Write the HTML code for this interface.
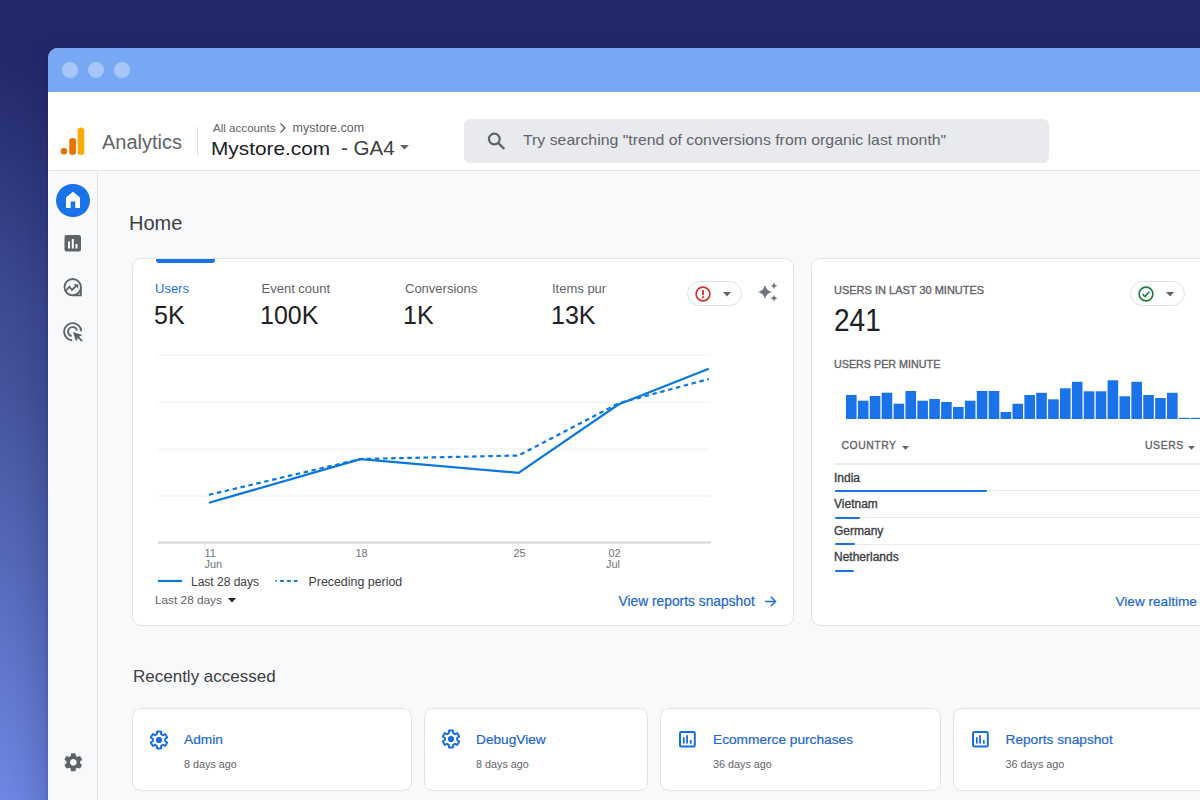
<!DOCTYPE html>
<html><head><meta charset="utf-8">
<style>
*{box-sizing:border-box;margin:0;padding:0}
html,body{width:1200px;height:800px;overflow:hidden}
body{font-family:"Liberation Sans",sans-serif;position:relative;
 background:linear-gradient(180deg,#22296b 0px,#23296c 60px,#2d367b 150px,#3e4b95 300px,#46559f 400px,#5b6fc1 600px,#7089e6 800px);}
.a{position:absolute;line-height:1;white-space:nowrap}
#win{position:absolute;left:48px;top:48px;width:1200px;height:800px;border-top-left-radius:10px;overflow:hidden;background:#f8f9fa;box-shadow:-1px 1px 3px rgba(15,20,60,.15),-6px 8px 44px rgba(15,20,70,.3)}
#bar{position:absolute;left:0;top:0;width:100%;height:44px;background:#78a8f4}
.dot{position:absolute;top:14px;width:16px;height:16px;border-radius:50%;background:#a7c6f6}
#hdr{position:absolute;left:0;top:44px;width:100%;height:79px;background:#fff;border-bottom:1px solid #e3e5e8}
#side{position:absolute;left:49px;top:123px;width:1px;height:700px;background:#e3e5e8}
.card{position:absolute;background:#fff;border:1px solid #e1e3e6;border-radius:8px}
.lbl{font-size:13px;color:#5f6368}
.big{font-size:25px;color:#202124}
.cap{font-size:11px;font-weight:400;color:#5f6368;-webkit-text-stroke:0.35px #5f6368}
.ctry{font-size:12px;color:#3c4043;font-weight:400;-webkit-text-stroke:0.35px #3c4043}
.rl{position:absolute;height:1px;background:#e8eaed}
.ub{position:absolute;height:2px;background:#1a73e8;border-radius:1px}
.bars{position:absolute;left:846px;top:370px;height:49px}
.b{position:absolute;bottom:0;width:10.5px;background:#1a73e8}
.ax{font-size:11px;color:#70757a}
.rt{font-size:13.7px;color:#1b67d6;-webkit-text-stroke:0.2px #1b67d6}
.rs{font-size:10.8px;color:#5f6368}
</style></head><body>
<div id="win">
 <div id="bar"><div class="dot" style="left:14px"></div><div class="dot" style="left:40px"></div><div class="dot" style="left:66px"></div></div>
 <div id="hdr"></div>
 <div id="side"></div>
</div>

<!-- header -->
<svg class="a" style="left:58px;top:126px" width="30" height="32" viewBox="0 0 30 32">
 <circle cx="6" cy="25.3" r="3.3" fill="#e37400"/>
 <rect x="11.3" y="12" width="6.7" height="17" rx="3.3" fill="#e37400"/>
 <rect x="19.6" y="1.6" width="6.7" height="27.4" rx="3.3" fill="#f9ab00"/>
</svg>
<div class="a" style="left:102px;top:132px;font-size:20px;color:#5f6368">Analytics</div>
<div class="a" style="left:197px;top:127px;width:1px;height:28px;background:#dadce0"></div>
<div class="a" style="left:213px;top:121.5px;font-size:11.6px;color:#5f6368">All accounts</div>
<svg class="a" style="left:279px;top:122px" width="8" height="12" viewBox="0 0 8 12"><path d="M1.5 1.5 L6 6 L1.5 10.5" stroke="#5f6368" stroke-width="1.4" fill="none"/></svg>
<div class="a" style="left:292.5px;top:121.5px;font-size:12.5px;color:#5f6368">mystore.com</div>
<div class="a" style="left:211px;top:139.2px;font-size:19px;color:#202124;transform:scaleX(1.095);transform-origin:0 0">Mystore.com</div>
<div class="a" style="left:341px;top:138px;font-size:20.5px;color:#3c4043">- GA4</div>
<svg class="a" style="left:400px;top:145px" width="9" height="5" viewBox="0 0 9 5"><path d="M0 0 L9 0 L4.5 4.5Z" fill="#5f6368"/></svg>

<div class="a" style="left:464px;top:119px;width:585px;height:44px;background:#e9eaee;border-radius:6px"></div>
<svg class="a" style="left:486px;top:131px" width="20" height="20" viewBox="0 0 20 20"><circle cx="8.3" cy="8" r="5.4" fill="none" stroke="#5f6368" stroke-width="2.2"/><path d="M12.2 11.9 L18.3 18" stroke="#5f6368" stroke-width="2.4" stroke-linecap="butt"/></svg>
<div class="a" style="left:523px;top:132.9px;font-size:14.3px;color:#5f6368;transform:scaleX(1.107);transform-origin:0 0">Try searching "trend of conversions from organic last month"</div>

<!-- sidebar -->
<div class="a" style="left:56px;top:183.5px;width:33.5px;height:33px;border-radius:50%;background:#1a73e8"></div>
<svg class="a" style="left:63px;top:190px" width="20" height="20" viewBox="0 0 20 20"><path fill="#fff" d="M10 1.8 L17 7.5 V18 H12.3 V11.5 H7.7 V18 H3 V7.5Z"/></svg>
<svg class="a" style="left:64px;top:235px" width="17" height="17" viewBox="0 0 17 17"><rect x="0.5" y="0" width="16.5" height="16.5" rx="2" fill="#5f6368"/><rect x="4" y="6.5" width="2" height="7" fill="#fff"/><rect x="7.8" y="4" width="2" height="9.5" fill="#fff"/><rect x="11.5" y="9" width="2" height="4.5" fill="#fff"/></svg>
<svg class="a" style="left:60px;top:275px" width="26" height="26" viewBox="0 0 26 26"><circle cx="12.7" cy="12.2" r="8.2" fill="none" stroke="#5f6368" stroke-width="1.8"/><path d="M20.9 12.2 V20.3 H12.7" fill="none" stroke="#5f6368" stroke-width="1.8"/><path d="M5.8 16 L9.4 11.6 L12 15 L16.6 10.4" fill="none" stroke="#5f6368" stroke-width="1.8"/><path d="M13.6 9.2 H18.2 V13.8Z" fill="#5f6368"/></svg>
<svg class="a" style="left:62px;top:320.6px" width="22" height="22" viewBox="0 0 22 22"><path d="M10.2 19.3 A8.6 8.6 0 1 1 19.3 10.2" fill="none" stroke="#5f6368" stroke-width="1.9"/><path d="M9.6 15 A4.5 4.5 0 1 1 15 9.6" fill="none" stroke="#5f6368" stroke-width="1.9"/><path d="M11 11 L20.5 14 L17 15.8 L20.8 19.6 L19.6 20.8 L15.8 17 L14 20.5Z" fill="#5f6368"/></svg>
<svg class="a" style="left:61.5px;top:751.3px" width="22.6" height="22.6" viewBox="0 0 24 24"><path fill="#5f6368" d="M19.14 12.94c.04-.3.06-.61.06-.94 0-.32-.02-.64-.07-.94l2.03-1.58a.49.49 0 0 0 .12-.61l-1.92-3.32a.488.488 0 0 0-.59-.22l-2.39.96c-.5-.38-1.03-.7-1.62-.94l-.36-2.54a.484.484 0 0 0-.48-.41h-3.84c-.24 0-.43.17-.47.41l-.36 2.54c-.59.24-1.13.57-1.62.94l-2.39-.96c-.22-.08-.47 0-.59.22L2.74 8.87c-.12.21-.08.47.12.61l2.03 1.58c-.05.3-.09.63-.09.94s.02.64.07.94l-2.03 1.58a.49.49 0 0 0-.12.61l1.92 3.32c.12.22.37.29.59.22l2.39-.96c.5.38 1.03.7 1.62.94l.36 2.54c.05.24.24.41.48.41h3.84c.24 0 .44-.17.47-.41l.36-2.54c.59-.24 1.13-.56 1.62-.94l2.39.96c.22.08.47 0 .59-.22l1.92-3.32c.12-.22.07-.47-.12-.61l-2.01-1.58zM12 15.6c-1.98 0-3.6-1.62-3.6-3.6s1.62-3.6 3.6-3.6 3.6 1.62 3.6 3.6-1.62 3.6-3.6 3.6z"/></svg>

<!-- Home -->
<div class="a" style="left:129px;top:213px;font-size:20px;color:#3c4043">Home</div>

<!-- card 1 -->
<div class="card" style="left:131.6px;top:258px;width:662.4px;height:368px;border-radius:9px"></div>
<div class="a" style="left:156px;top:258.6px;width:59px;height:4.2px;background:#1a73e8;border-radius:0 0 3px 3px"></div>
<div class="a lbl" style="left:155px;top:281.5px;color:#1a73e8">Users</div>
<div class="a lbl" style="left:261.5px;top:281.5px">Event count</div>
<div class="a lbl" style="left:405px;top:281.5px">Conversions</div>
<div class="a lbl" style="left:552px;top:281.5px;width:54px;overflow:hidden">Items purchased</div>
<div class="a big" style="left:154px;top:303px">5K</div>
<div class="a big" style="left:260px;top:303px">100K</div>
<div class="a big" style="left:403px;top:303px">1K</div>
<div class="a big" style="left:551px;top:303px">13K</div>
<div class="a" style="left:687.3px;top:281px;width:55px;height:25.3px;border:1px solid #dfe1e4;border-radius:13px"></div>
<svg class="a" style="left:695px;top:285.5px" width="16" height="16" viewBox="0 0 16 16"><circle cx="8" cy="8" r="6.9" fill="none" stroke="#d93025" stroke-width="1.6"/><rect x="7.1" y="4" width="1.8" height="5.2" fill="#d93025"/><rect x="7.1" y="10.3" width="1.8" height="1.8" fill="#d93025"/></svg>
<svg class="a" style="left:722.5px;top:292px" width="8" height="4.5" viewBox="0 0 8 4.5"><path d="M0 0H8L4 4.5Z" fill="#5f6368"/></svg>
<svg class="a" style="left:756px;top:282px" width="24" height="20" viewBox="0 0 24 20"><path fill="#70757a" d="M9 2.5 Q10 9 16.5 10 Q10 11 9 17.5 Q8 11 1.5 10 Q8 9 9 2.5Z"/><path fill="#70757a" d="M18 0.5 Q18.5 3.3 21.5 3.8 Q18.5 4.3 18 7.1 Q17.5 4.3 14.6 3.8 Q17.5 3.3 18 0.5Z"/><path fill="#70757a" d="M18 13 Q18.5 15.8 21.5 16.3 Q18.5 16.8 18 19.6 Q17.5 16.8 14.6 16.3 Q17.5 15.8 18 13Z"/></svg>

<!-- chart -->
<svg class="a" style="left:0;top:0" width="800" height="640">
 <g stroke="#eceef0" stroke-width="1">
  <line x1="158" y1="355" x2="710" y2="355"/>
  <line x1="158" y1="402" x2="710" y2="402"/>
  <line x1="158" y1="449" x2="710" y2="449"/>
  <line x1="158" y1="496" x2="710" y2="496"/>
 </g>
 <line x1="158" y1="542.5" x2="711" y2="542.5" stroke="#dadce0" stroke-width="2.5"/>
 <g stroke="#e3e5e8" stroke-width="1">
  <line x1="204.5" y1="544" x2="204.5" y2="548"/>
  <line x1="361" y1="544" x2="361" y2="548"/>
  <line x1="519" y1="544" x2="519" y2="548"/>
  <line x1="620" y1="544" x2="620" y2="548"/>
 </g>
 <polyline points="209,494.8 360.5,459 518.6,455.5 618.4,403.3 709,379" fill="none" stroke="#0b77e0" stroke-width="2.2" stroke-dasharray="4.5,3.6"/>
 <polyline points="209,502.8 360.5,459.1 518.6,472.8 618.4,404.6 708.8,368.8" fill="none" stroke="#0b77e0" stroke-width="2.2"/>
 <line x1="158" y1="581" x2="182" y2="581" stroke="#0b77e0" stroke-width="2.2"/>
 <line x1="275.5" y1="581" x2="300" y2="581" stroke="#0b77e0" stroke-width="2.2" stroke-dasharray="3.6,3.3" stroke-dashoffset="2.2"/>
</svg>
<div class="a ax" style="left:204.5px;top:547.5px">11</div>
<div class="a ax" style="left:204.5px;top:558.5px">Jun</div>
<div class="a ax" style="left:355.5px;top:547.5px">18</div>
<div class="a ax" style="left:513.5px;top:547.5px">25</div>
<div class="a ax" style="left:608.5px;top:547.5px">02</div>
<div class="a ax" style="left:606px;top:558.5px">Jul</div>
<div class="a" style="left:191px;top:576px;font-size:12px;color:#3c4043">Last 28 days</div>
<div class="a" style="left:308.5px;top:576px;font-size:12.4px;color:#3c4043">Preceding period</div>
<div class="a" style="left:155px;top:595px;font-size:11.8px;color:#5f6368">Last 28 days</div>
<svg class="a" style="left:227.5px;top:598px" width="8" height="4.5" viewBox="0 0 8 4.5"><path d="M0 0H8L4 4.5Z" fill="#202124"/></svg>
<div class="a" style="left:618.5px;top:594.7px;font-size:13.8px;color:#1b67d6;-webkit-text-stroke:0.2px #1b67d6">View reports snapshot</div>
<svg class="a" style="left:764px;top:595px" width="13" height="13" viewBox="0 0 13 13"><path d="M1 6.5H11.5M6.8 1.8L11.5 6.5L6.8 11.2" fill="none" stroke="#1a73e8" stroke-width="1.5"/></svg>

<!-- card 2 -->
<div class="card" style="left:811px;top:258px;width:500px;height:368px;border-radius:9px"></div>
<div class="a cap" style="left:834px;top:285px">USERS IN LAST 30 MINUTES</div>
<div class="a" style="left:834px;top:303.5px;font-size:32px;color:#202124;transform:scaleX(0.875);transform-origin:0 0">241</div>
<div class="a" style="left:1130px;top:281px;width:55px;height:25.3px;border:1px solid #dfe1e4;border-radius:13px"></div>
<svg class="a" style="left:1138px;top:285.5px" width="16" height="16" viewBox="0 0 16 16"><circle cx="8" cy="8" r="6.9" fill="none" stroke="#188038" stroke-width="1.6"/><path d="M4.6 8.2 L7 10.5 L11.4 5.8" fill="none" stroke="#188038" stroke-width="1.6"/></svg>
<svg class="a" style="left:1165.5px;top:292px" width="8" height="4.5" viewBox="0 0 8 4.5"><path d="M0 0H8L4 4.5Z" fill="#5f6368"/></svg>
<div class="a cap" style="left:834px;top:358.6px;font-size:10.75px">USERS PER MINUTE</div>
<svg class="a" style="left:846px;top:370px" width="360" height="49" viewBox="0 0 360 49"><g fill="#1a73e8"><rect x="0.00" y="25.0" width="10.6" height="24.0"/><rect x="11.89" y="30.7" width="10.6" height="18.3"/><rect x="23.78" y="26.0" width="10.6" height="23.0"/><rect x="35.67" y="22.7" width="10.6" height="26.3"/><rect x="47.56" y="33.7" width="10.6" height="15.3"/><rect x="59.45" y="21.0" width="10.6" height="28.0"/><rect x="71.34" y="30.7" width="10.6" height="18.3"/><rect x="83.23" y="29.0" width="10.6" height="20.0"/><rect x="95.12" y="32.0" width="10.6" height="17.0"/><rect x="107.01" y="37.0" width="10.6" height="12.0"/><rect x="118.90" y="30.7" width="10.6" height="18.3"/><rect x="130.79" y="21.0" width="10.6" height="28.0"/><rect x="142.68" y="21.0" width="10.6" height="28.0"/><rect x="154.57" y="42.0" width="10.6" height="7.0"/><rect x="166.46" y="33.8" width="10.6" height="15.2"/><rect x="178.35" y="25.0" width="10.6" height="24.0"/><rect x="190.24" y="22.8" width="10.6" height="26.2"/><rect x="202.13" y="29.3" width="10.6" height="19.7"/><rect x="214.02" y="18.3" width="10.6" height="30.7"/><rect x="225.91" y="11.8" width="10.6" height="37.2"/><rect x="237.80" y="21.3" width="10.6" height="27.7"/><rect x="249.69" y="21.3" width="10.6" height="27.7"/><rect x="261.58" y="10.3" width="10.6" height="38.7"/><rect x="273.47" y="26.3" width="10.6" height="22.7"/><rect x="285.36" y="11.8" width="10.6" height="37.2"/><rect x="297.25" y="25.0" width="10.6" height="24.0"/><rect x="309.14" y="28.0" width="10.6" height="21.0"/><rect x="321.03" y="22.8" width="10.6" height="26.2"/><rect x="332.92" y="47.8" width="10.6" height="1.2"/><rect x="344.81" y="47.8" width="10.6" height="1.2"/></g></svg>
<div class="a cap" style="left:841.5px;top:440.5px;font-size:10.4px;letter-spacing:0.55px">COUNTRY</div>
<svg class="a" style="left:902px;top:445.5px" width="7" height="4" viewBox="0 0 7 4"><path d="M0 0H7L3.5 3.8Z" fill="#5f6368"/></svg>
<div class="a cap" style="left:1145px;top:440.8px;font-size:10.4px;letter-spacing:0.6px">USERS</div>
<svg class="a" style="left:1188px;top:445.5px" width="7" height="4" viewBox="0 0 7 4"><path d="M0 0H7L3.5 3.8Z" fill="#5f6368"/></svg>
<div class="rl" style="left:833.5px;top:463px;width:400px;height:2px;background:#e8eaed"></div>
<div class="a ctry" style="left:834px;top:471.6px">India</div>
<div class="rl" style="left:833.5px;top:490px;width:400px"></div>
<div class="ub" style="left:834.5px;top:489.5px;width:152.5px"></div>
<div class="a ctry" style="left:834px;top:498px">Vietnam</div>
<div class="rl" style="left:833.5px;top:517px;width:400px"></div>
<div class="ub" style="left:834.5px;top:516.5px;width:25px"></div>
<div class="a ctry" style="left:834px;top:524.5px">Germany</div>
<div class="rl" style="left:833.5px;top:543.5px;width:400px"></div>
<div class="ub" style="left:834.5px;top:542.5px;width:20.5px"></div>
<div class="a ctry" style="left:834px;top:551.2px">Netherlands</div>
<div class="ub" style="left:834.5px;top:569.5px;width:19px"></div>
<div class="a" style="left:1115.5px;top:594.9px;font-size:13.6px;color:#1b67d6;-webkit-text-stroke:0.2px #1b67d6">View realtime</div>

<!-- recently accessed -->
<div class="a" style="left:133px;top:667.5px;font-size:17px;color:#3c4043">Recently accessed</div>
<div class="card" style="left:132px;top:708px;width:280px;height:83px;border-radius:9px"></div>
<div class="card" style="left:424px;top:708px;width:223.6px;height:83px;border-radius:9px"></div>
<div class="card" style="left:660px;top:708px;width:281px;height:83px;border-radius:9px"></div>
<div class="card" style="left:953px;top:708px;width:300px;height:83px;border-radius:9px"></div>
<svg class="a" style="left:146.6px;top:727.6px" width="24" height="24" viewBox="0 0 24 24"><path d="M9.78 6.21 L10.07 3.62 L13.93 3.62 L14.22 6.21 L15.10 6.63 L15.90 7.18 L18.29 6.13 L20.22 9.49 L18.12 11.03 L18.20 12.00 L18.12 12.97 L20.22 14.51 L18.29 17.87 L15.90 16.82 L15.10 17.37 L14.22 17.79 L13.93 20.38 L10.07 20.38 L9.78 17.79 L8.90 17.37 L8.10 16.82 L5.71 17.87 L3.78 14.51 L5.88 12.97 L5.80 12.00 L5.88 11.03 L3.78 9.49 L5.71 6.13 L8.10 7.18 L8.90 6.63Z" fill="none" stroke="#1a6ddf" stroke-width="2" stroke-linejoin="round"/><circle cx="12" cy="12" r="3.1" fill="#1a6ddf"/></svg>
<div class="a rt" style="left:184px;top:732.7px">Admin</div>
<div class="a rs" style="left:184px;top:759.2px">8 days ago</div>
<svg class="a" style="left:438.9px;top:727.2px" width="24" height="24" viewBox="0 0 24 24"><path d="M9.78 6.21 L10.07 3.62 L13.93 3.62 L14.22 6.21 L15.10 6.63 L15.90 7.18 L18.29 6.13 L20.22 9.49 L18.12 11.03 L18.20 12.00 L18.12 12.97 L20.22 14.51 L18.29 17.87 L15.90 16.82 L15.10 17.37 L14.22 17.79 L13.93 20.38 L10.07 20.38 L9.78 17.79 L8.90 17.37 L8.10 16.82 L5.71 17.87 L3.78 14.51 L5.88 12.97 L5.80 12.00 L5.88 11.03 L3.78 9.49 L5.71 6.13 L8.10 7.18 L8.90 6.63Z" fill="none" stroke="#1a6ddf" stroke-width="2" stroke-linejoin="round"/><circle cx="12" cy="12" r="3.1" fill="#1a6ddf"/></svg>
<div class="a rt" style="left:476px;top:732.7px">DebugView</div>
<div class="a rs" style="left:476px;top:759.2px">8 days ago</div>
<svg class="a" style="left:679px;top:731px" width="17" height="17" viewBox="0 0 17 17"><rect x="1" y="1" width="14.8" height="14.6" rx="1.3" fill="none" stroke="#1a6ddf" stroke-width="2"/><rect x="3.9" y="6" width="1.8" height="6.8" rx="0.8" fill="#1a6ddf"/><rect x="7.2" y="3.9" width="1.8" height="8.9" rx="0.8" fill="#1a6ddf"/><rect x="10.9" y="9" width="1.8" height="3.8" rx="0.6" fill="#1a6ddf"/></svg>
<div class="a rt" style="left:713px;top:732.7px">Ecommerce purchases</div>
<div class="a rs" style="left:713px;top:759.2px">36 days ago</div>
<svg class="a" style="left:971.5px;top:731px" width="17" height="17" viewBox="0 0 17 17"><rect x="1" y="1" width="14.8" height="14.6" rx="1.3" fill="none" stroke="#1a6ddf" stroke-width="2"/><rect x="3.9" y="6" width="1.8" height="6.8" rx="0.8" fill="#1a6ddf"/><rect x="7.2" y="3.9" width="1.8" height="8.9" rx="0.8" fill="#1a6ddf"/><rect x="10.9" y="9" width="1.8" height="3.8" rx="0.6" fill="#1a6ddf"/></svg>
<div class="a rt" style="left:1005.5px;top:732.7px">Reports snapshot</div>
<div class="a rs" style="left:1005.5px;top:759.2px">36 days ago</div>


</body></html>
